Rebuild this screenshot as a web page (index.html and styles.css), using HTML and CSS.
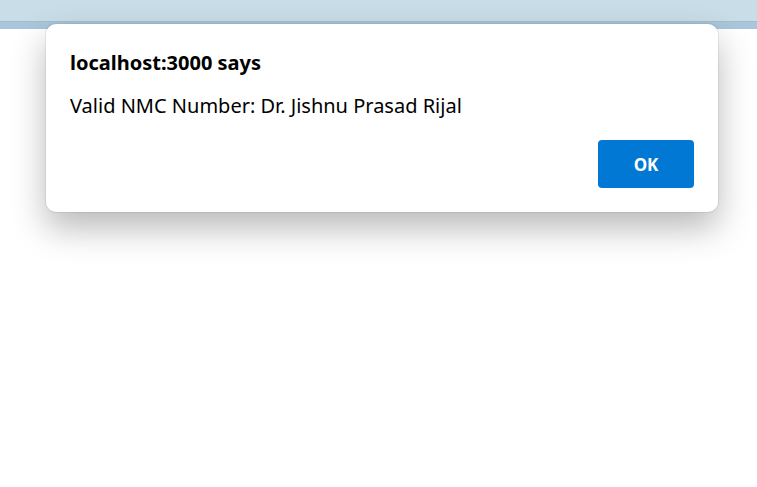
FILE: index.html
```html
<!DOCTYPE html>
<html>
<head>
<meta charset="utf-8">
<link rel="stylesheet" href="styles.css">
</head>
<body>
<div class="topbar">
  <div class="topbar-light"></div>
  <div class="topbar-line"></div>
  <div class="topbar-band"></div>
</div>
<div class="page"></div>
<div class="dialog" role="alertdialog">
  <div class="dialog-title">localhost:3000 says</div>
  <div class="dialog-message">Valid NMC Number: Dr. Jishnu Prasad Rijal</div>
  <div class="dialog-actions">
    <button class="btn-ok">OK</button>
  </div>
</div>
</body>
</html>
```
FILE: styles.css
```css
html, body {
  margin: 0;
  padding: 0;
  background: #ffffff;
  font-family: "Noto Sans", "Open Sans", sans-serif;
}
.topbar {
  display: flex;
  flex-direction: column;
}
.topbar-light {
  height: 21px;
  background: #c9dde8;
}
.topbar-line {
  height: 1px;
  background: #a7bccb;
}
.topbar-band {
  height: 7px;
  background: #a8c7da;
}
.dialog {
  position: absolute;
  left: 46px;
  top: 24px;
  width: 672px;
  height: 188px;
  box-sizing: border-box;
  background: #ffffff;
  border-radius: 10px;
  box-shadow: 0 0 0 1px rgba(0,0,0,0.06), 0 16px 34px rgba(0,0,0,0.28);
  padding: 24px 24px 24px 24px;
  display: flex;
  flex-direction: column;
}
.dialog-title {
  font-size: 20px;
  font-weight: 700;
  color: #000;
  line-height: 29px;
}
.dialog-message {
  margin-top: 15px;
  font-size: 20px;
  color: #000;
  line-height: 28px;
}
.dialog-actions {
  margin-top: auto;
  display: flex;
  justify-content: flex-end;
}
.btn-ok {
  width: 96px;
  height: 48px;
  border: none;
  border-radius: 4px;
  background: #0078d4;
  color: #fff;
  font-family: inherit;
  font-size: 17px;
  font-weight: 700;
  cursor: pointer;
}
```
